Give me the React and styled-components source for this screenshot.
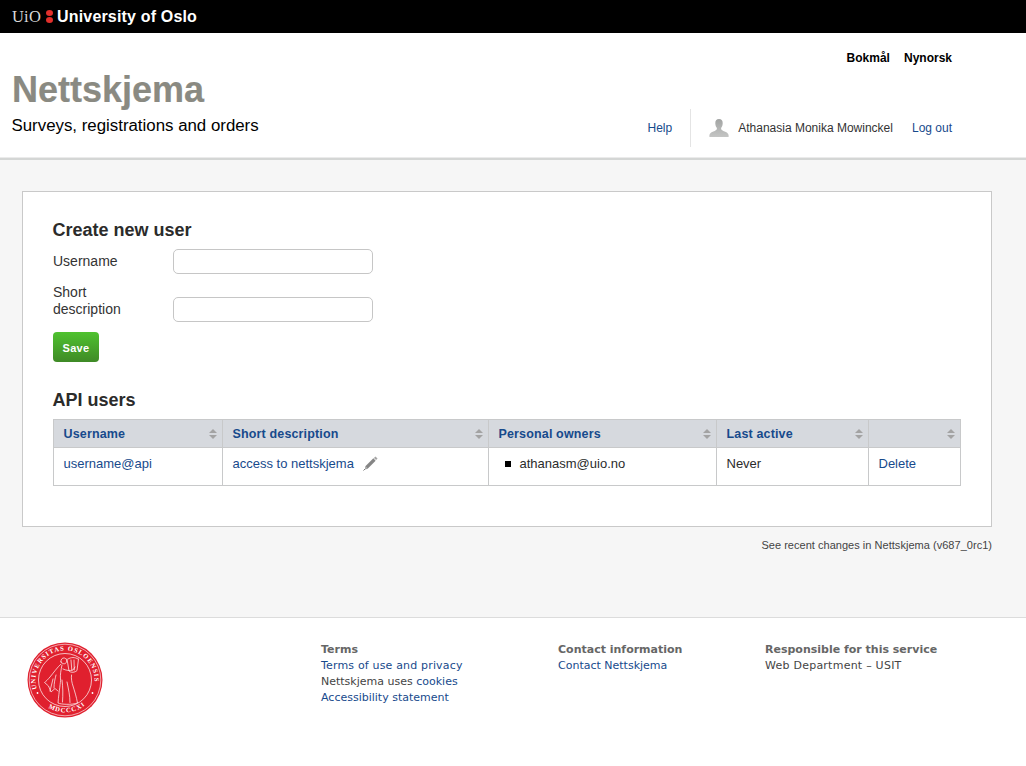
import React from "react";
import styled, { createGlobalStyle } from "styled-components";

const GlobalStyle = createGlobalStyle`
  html, body {
    margin: 0;
    padding: 0;
    background: #fff;
    font-family: "Liberation Sans", Arial, sans-serif;
    color: #2b2b2b;
  }
  a {
    color: #174a8c;
    text-decoration: none;
  }
`;

const TopBar = styled.div`
  height: 33px;
  background: #000;
  display: flex;
  align-items: center;
  padding-left: 12px;
  color: #fff;
`;

const UioMark = styled.span`
  font-family: "Liberation Serif", serif;
  font-size: 16.5px;
  color: #d8d8d8;
  letter-spacing: 0.2px;
`;

const UioDots = styled.span`
  display: flex;
  flex-direction: column;
  gap: 1px;
  margin: 0 4px 0 5px;

  i {
    width: 7px;
    height: 6px;
    border-radius: 50%;
    background: #e2302c;
  }
`;

const UioName = styled.span`
  font-size: 16px;
  font-weight: bold;
  letter-spacing: 0.17px;
`;

const Header = styled.header`
  height: 125px;
  display: flex;
  justify-content: space-between;
  padding: 0 74px 0 12px;
  border-bottom: 2px solid #d4d6d5;
  box-shadow: inset 0 -1px 0 #ebebeb;
`;

const Brand = styled.div`
  padding-top: 36px;
`;

const Title = styled.h1`
  margin: 0;
  font-size: 36px;
  line-height: 42px;
  font-weight: bold;
  color: #8a8a82;
  -webkit-text-stroke: 0.2px #8a8a82;
`;

const Tagline = styled.div`
  margin-top: 5px;
  margin-left: -0.5px;
  font-size: 16.85px;
  line-height: 20px;
  color: #000;
`;

const HeaderRight = styled.div`
  display: flex;
  flex-direction: column;
  align-items: flex-end;
`;

const Languages = styled.div`
  display: flex;
  gap: 14px;
  padding-top: 18px;
  font-size: 12px;
  line-height: 14px;
  font-weight: bold;
  color: #000;
`;

const UserNav = styled.div`
  display: flex;
  align-items: center;
  height: 38px;
  margin-top: 44px;
  font-size: 12px;
`;

const NavDivider = styled.span`
  width: 1px;
  height: 38px;
  background: #e4e4e4;
  margin: 0 18px 0 18px;
`;

const UserName = styled.span`
  margin: 0 19px 0 9px;
  color: #333;
`;

const Main = styled.main`
  background: #f6f6f6;
  height: 457px;
  box-sizing: border-box;
  padding: 31px 34px 0 22px;
`;

const Card = styled.section`
  height: 336px;
  box-sizing: border-box;
  background: #fff;
  border: 1px solid #c9c9c9;
  padding: 27px 30px 0;
`;

const Heading = styled.h2`
  margin: 0 0 0 -0.5px;
  font-size: 18px;
  line-height: 22px;
  font-weight: bold;
  color: #2b2b2b;
`;

const FormRow = styled.div`
  display: flex;
  align-items: ${(p) => (p.$bottom ? "flex-end" : "center")};
  margin-top: ${(p) => p.$top}px;
`;

const FieldLabel = styled.label`
  width: 120px;
  font-size: 14px;
  line-height: 17px;
  color: #333;
  padding-bottom: ${(p) => (p.$bottom ? 4 : 0)}px;
`;

const TextInput = styled.input`
  width: 200px;
  height: 25px;
  box-sizing: border-box;
  border: 1px solid #c6c6c6;
  border-radius: 5px;
  background: #fff;
  padding: 0 6px;
`;

const SaveButton = styled.button`
  display: block;
  width: 46px;
  height: 30px;
  margin-top: 10px;
  padding: 2px 0 0;
  border: 0;
  border-radius: 4px;
  background: linear-gradient(#4fc22f, #3f8a26);
  color: #fff;
  font-family: "Liberation Sans", Arial, sans-serif;
  font-size: 11px;
  font-weight: bold;
  letter-spacing: 0.3px;
`;

const ApiHeading = styled(Heading)`
  margin-top: 27px;
`;

const Table = styled.table`
  width: 907px;
  margin-top: 8px;
  border-collapse: collapse;
  table-layout: fixed;
  font-size: 13px;
`;

const HeadCell = styled.th`
  position: relative;
  height: 27px;
  padding: 0 0 0 9.5px;
  background: #d6d9de;
  border: 1px solid #c8c9ca;
  text-align: left;
  font-size: 12.5px;
  font-weight: bold;
  color: #174a8c;
  letter-spacing: 0.15px;
`;

const SortArrows = styled.span`
  position: absolute;
  right: 5px;
  top: 9px;
  display: flex;
  flex-direction: column;
  gap: 2px;

  &::before,
  &::after {
    content: "";
    width: 0;
    height: 0;
    border-left: 4px solid transparent;
    border-right: 4px solid transparent;
  }
  &::before {
    border-bottom: 4px solid #a3a3a3;
  }
  &::after {
    border-top: 4px solid #a3a3a3;
  }
`;

const Cell = styled.td`
  height: 31px;
  padding: 0 0 6px 9.5px;
  border: 1px solid #c8c9ca;
  color: #2b2b2b;
`;

const OwnerList = styled.ul`
  margin: 0;
  padding: 0 0 0 6px;
  list-style: none;
`;

const OwnerItem = styled.li`
  display: flex;
  align-items: center;
  gap: 9px;

  &::before {
    content: "";
    width: 6px;
    height: 6px;
    background: #000;
  }
`;

const PencilIcon = styled.svg`
  margin-left: 9px;
  vertical-align: -3px;
`;

const ChangesNote = styled.div`
  margin-top: 12px;
  text-align: right;
  font-size: 11px;
  line-height: 13px;
  color: #444;
  letter-spacing: 0.03px;
`;

const Footer = styled.footer`
  height: 149px;
  box-sizing: border-box;
  border-top: 1px solid #dcdcdc;
  display: grid;
  grid-template-columns: 321px 237px 207px 1fr;
  padding-top: 24px;
  font-family: "DejaVu Sans", Verdana, sans-serif;
  font-size: 11px;
  line-height: 16px;
  color: #444;
`;

const SealCol = styled.div`
  padding: 0 0 0 27px;
`;

const FooterCol = styled.div`
  display: flex;
  flex-direction: column;
`;

const FooterTitle = styled.strong`
  color: #666;
`;

const FooterLink = styled.a`
  letter-spacing: ${(p) => p.$track || 0}px;
`;

const FooterText = styled.span`
  letter-spacing: ${(p) => p.$track || 0}px;
`;

function UserIcon() {
  return (
    <svg width="20" height="18" viewBox="0 0 20 18" aria-hidden="true">
      <defs>
        <linearGradient id="userFill" x1="0" y1="0" x2="0" y2="1">
          <stop offset="0" stopColor="#a2a4a3" />
          <stop offset="1" stopColor="#c4c5c4" />
        </linearGradient>
      </defs>
      <path
        d="M10 0c2.700 0 3.800 1.900 3.700 4.300 0 1.900-.6 3.500-1.600 4.800-.1 1.400.5 2.100 2.200 2.800 2.800 1 4.900 1.900 5.300 4.100v2H.400v-2c.4-2.200 2.500-3.100 5.300-4.100 1.700-.7 2.300-1.400 2.200-2.800-1-1.300-1.600-2.900-1.600-4.800C6.200 1.900 7.300 0 10 0z"
        fill="url(#userFill)"
      />
    </svg>
  );
}

function Pencil() {
  return (
    <PencilIcon width="15" height="15" viewBox="0 0 15 15" aria-hidden="true">
      <path d="M3.500 11.500l8-8" stroke="#858585" strokeWidth="3.200" />
      <path d="M12 3l1.500-1.500" stroke="#a5a5a5" strokeWidth="3" />
      <path d="M2.300 10l2.700 2.700-3 .8z" fill="#a0a0a0" />
      <path d="M.5 14.500l1.500-1.500" stroke="#777" strokeWidth="1" />
    </PencilIcon>
  );
}

function Seal() {
  return (
    <svg width="76" height="76" viewBox="0 0 76 76" aria-label="University of Oslo seal">
      <circle cx="38" cy="38" r="37.500" fill="#e0202e" />
      <circle cx="38" cy="38" r="35.800" fill="none" stroke="#fff" strokeWidth="0.6" />
      <circle cx="38" cy="38" r="26.500" fill="none" stroke="#fff" strokeWidth="0.7" />
      <defs>
        <path id="sealTop" d="M 9.900 47 A 29.500 29.500 0 1 1 66.100 47" />
        <path id="sealBottom" d="M 15.700 61.500 A 32.500 32.500 0 0 0 60.300 61.500" />
      </defs>
      <text fill="#fff" fontFamily="Liberation Serif, serif" fontSize="6.600" fontWeight="bold" letterSpacing="0.95">
        <textPath href="#sealTop">UNIVERSITAS OSLOENSIS</textPath>
      </text>
      <text fill="#fff" fontFamily="Liberation Serif, serif" fontSize="6.600" fontWeight="bold" letterSpacing="1">
        <textPath href="#sealBottom" startOffset="7">MDCCCXI</textPath>
      </text>
      <circle cx="10.500" cy="51" r="0.9" fill="#fff" />
      <circle cx="65.500" cy="51" r="0.9" fill="#fff" />
      <g fill="none" stroke="#fff" strokeWidth="0.7" strokeLinecap="round" strokeLinejoin="round">
        <path d="M34 20c-.5-2.500 1.300-4.500 3.500-4 2 .4 2.800 2.700 1.700 4.600-1 1.700-3.700 1.700-5.200-.6z" />
        <path d="M34 22c-3.500 3-8 9.500-11 13-2 2.300-4 4.500-5.500 5.500l4 3.500 2.500 6 4-3.500 3 2.500" />
        <path d="M35 23c-1 5-2 10-1.500 14 .3 3-1.500 12-2.500 24 3 1.500 14 2 19.500 0-1-6-3-12-4.500-17-1-3-2-7-1.500-11" />
        <path d="M36 27c3 1.500 7 2 10 1l2-3" />
        <path d="M40 17l2 12c2 2 6 1.500 8-.5l1.500-11.500M41 17c3-2 7-2 10 0" />
        <path d="M44 18l.8 10M47 18l.3 10" />
        <path d="M29 33c-1 4-2 8-2 13M35 38c1 7 1 15 .5 22M40 40c1.500 7 3 14 3 20.500M26 37l-3 12" />
      </g>
    </svg>
  );
}

const columns = [
  { label: "Username", width: 169 },
  { label: "Short description", width: 266 },
  { label: "Personal owners", width: 228 },
  { label: "Last active", width: 152 },
  { label: "", width: 92 },
];

export default function App() {
  return (
    <>
      <GlobalStyle />
      <TopBar>
        <UioMark>UiO</UioMark>
        <UioDots>
          <i />
          <i />
        </UioDots>
        <UioName>University of Oslo</UioName>
      </TopBar>
      <Header>
        <Brand>
          <Title>Nettskjema</Title>
          <Tagline>Surveys, registrations and orders</Tagline>
        </Brand>
        <HeaderRight>
          <Languages>
            <span>Bokmål</span>
            <span>Nynorsk</span>
          </Languages>
          <UserNav>
            <a href="#help">Help</a>
            <NavDivider />
            <UserIcon />
            <UserName>Athanasia Monika Mowinckel</UserName>
            <a href="#logout">Log out</a>
          </UserNav>
        </HeaderRight>
      </Header>
      <Main>
        <Card>
          <Heading>Create new user</Heading>
          <FormRow $top={8}>
            <FieldLabel>Username</FieldLabel>
            <TextInput type="text" />
          </FormRow>
          <FormRow $top={10} $bottom>
            <FieldLabel $bottom>
              Short
              <br />
              description
            </FieldLabel>
            <TextInput type="text" />
          </FormRow>
          <SaveButton type="button">Save</SaveButton>
          <ApiHeading>API users</ApiHeading>
          <Table>
            <colgroup>
              {columns.map((c) => (
                <col key={c.label} style={{ width: c.width }} />
              ))}
            </colgroup>
            <thead>
              <tr>
                {columns.map((c) => (
                  <HeadCell key={c.label}>
                    {c.label}
                    <SortArrows />
                  </HeadCell>
                ))}
              </tr>
            </thead>
            <tbody>
              <tr>
                <Cell>
                  <a href="#user">username@api</a>
                </Cell>
                <Cell>
                  <a href="#desc">access to nettskjema</a>
                  <Pencil />
                </Cell>
                <Cell>
                  <OwnerList>
                    <OwnerItem>athanasm@uio.no</OwnerItem>
                  </OwnerList>
                </Cell>
                <Cell>Never</Cell>
                <Cell>
                  <a href="#delete">Delete</a>
                </Cell>
              </tr>
            </tbody>
          </Table>
        </Card>
        <ChangesNote>See recent changes in Nettskjema (v687_0rc1)</ChangesNote>
      </Main>
      <Footer>
        <SealCol>
          <Seal />
        </SealCol>
        <FooterCol>
          <FooterTitle>Terms</FooterTitle>
          <FooterLink href="#terms" $track={0.17}>Terms of use and privacy</FooterLink>
          <span>
            Nettskjema uses <a href="#cookies">cookies</a>
          </span>
          <a href="#a11y">Accessibility statement</a>
        </FooterCol>
        <FooterCol>
          <FooterTitle>Contact information</FooterTitle>
          <a href="#contact">Contact Nettskjema</a>
        </FooterCol>
        <FooterCol>
          <FooterTitle>Responsible for this service</FooterTitle>
          <FooterText $track={0.24}>Web Department – USIT</FooterText>
        </FooterCol>
      </Footer>
    </>
  );
}
